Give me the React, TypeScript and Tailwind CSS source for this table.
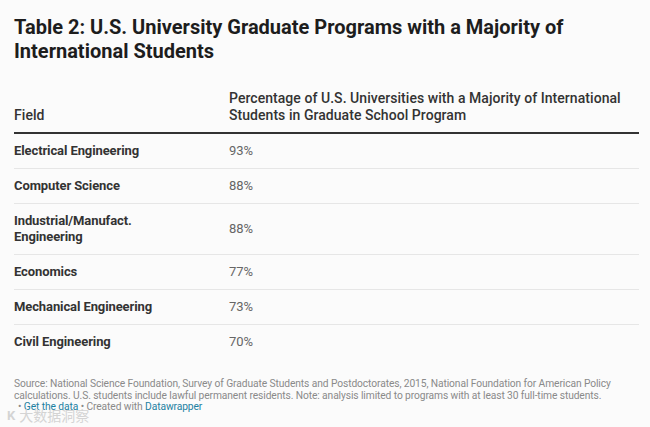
import React from "react";

const rows: { field: string[]; pct: string }[] = [
  { field: ["Electrical Engineering"], pct: "93%" },
  { field: ["Computer Science"], pct: "88%" },
  { field: ["Industrial/Manufact.", "Engineering"], pct: "88%" },
  { field: ["Economics"], pct: "77%" },
  { field: ["Mechanical Engineering"], pct: "73%" },
  { field: ["Civil Engineering"], pct: "70%" },
];

export default function App() {
  return (
    <div
      className="w-[650px] h-[427px] bg-[#fbfbfb] overflow-hidden relative"
      style={{ fontFamily: "Roboto, 'Noto Sans CJK SC', sans-serif" }}
    >
      <div className="pl-[14px] pr-[11px] pt-[15px]">
        <h1 className="text-[20px] leading-[24px] font-bold text-[#1d1d1d]">
          Table 2: U.S. University Graduate Programs with a Majority of
          <br />
          International Students
        </h1>
        <div className="mt-[27px] flex items-end border-b-2 border-[#333333] pb-[8px] text-[14px] leading-[17px] font-medium text-[#333333] tracking-[0.05px]">
          <div className="w-[215px]">Field</div>
          <div className="flex-1">
            Percentage of U.S. Universities with a Majority of International
            <br />
            Students in Graduate School Program
          </div>
        </div>
        {rows.map((r, i) => (
          <div
            key={i}
            className={`flex items-center py-[9px] text-[13px] leading-[16px] ${
              i < rows.length - 1 ? "border-b border-[#e6e6e6]" : ""
            }`}
          >
            <div className="w-[215px] font-bold text-[#333333] tracking-[-0.1px]">
              {r.field.map((f, j) => (
                <div key={j}>{f}</div>
              ))}
            </div>
            <div className="flex-1 text-[#666666]">{r.pct}</div>
          </div>
        ))}
        <div className="mt-[19px] text-[10.25px] leading-[11.5px] text-[#8a8a8a] tracking-[-0.1px] whitespace-nowrap">
          <div>
            Source: National Science Foundation, Survey of Graduate Students and Postdoctorates, 2015, National Foundation for American Policy
          </div>
          <div>
            calculations. U.S. students include lawful permanent residents. Note: analysis limited to programs with at least 30 full-time students.
          </div>
          <div>
            <span className="ml-[4px]">• </span>
            <span className="text-[#1d81a2]">Get the data</span>
            <span> • Created with </span>
            <span className="text-[#1d81a2]">Datawrapper</span>
          </div>
        </div>
      </div>
      <div className="absolute left-[7px] top-[409px] flex items-center gap-[4px] text-[14px] leading-[14px] text-[#d4d4d4]">
        <span className="text-[13px] font-bold">K</span>
        <span>大数据洞察</span>
      </div>
    </div>
  );
}
